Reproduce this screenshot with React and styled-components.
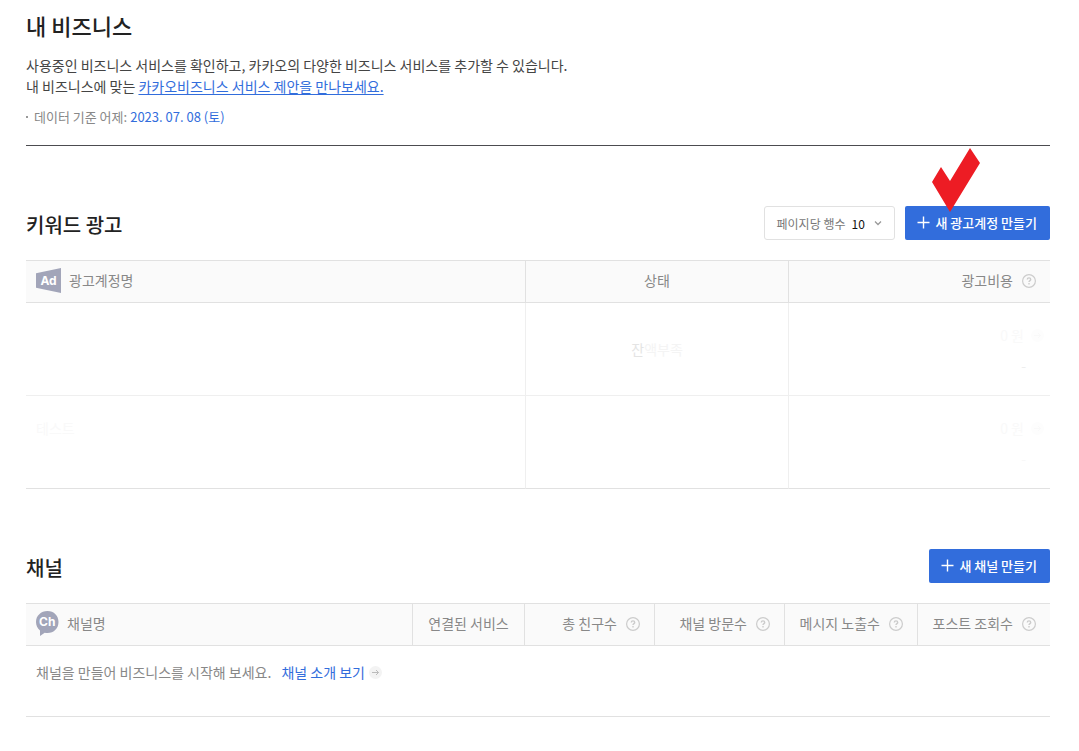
import styled, { createGlobalStyle } from "styled-components";

const GlobalStyle = createGlobalStyle`
  * {
    box-sizing: border-box;
  }

  body {
    margin: 0;
    background: #fff;
    color: #222;
    font-family: "Noto Sans CJK KR", "Noto Sans", sans-serif;
    font-size: 14px;
    line-height: 21px;
  }

  button,
  select {
    font-family: inherit;
  }
`;

const Page = styled.main`
  padding: 7px 29px 34px 26px;
`;

const PageHeader = styled.header`
  padding-bottom: 18px;
  border-bottom: 1px solid #4c4c50;
`;

const Title = styled.h1`
  margin: 0 0 12px;
  font-size: 22px;
  font-weight: 500;
  line-height: 36px;
`;

const Intro = styled.p`
  margin: 0 0 9px;
  color: #444;
`;

const IntroLink = styled.a`
  color: #326ddc;
  text-decoration: underline;
  text-underline-offset: 2px;
`;

const Notice = styled.p`
  display: flex;
  align-items: center;
  gap: 3px;
  margin: 0;
  color: #888;
  font-size: 13px;

  &::before {
    content: "";
    width: 2px;
    height: 2px;
    margin-right: 3px;
    background: #999;
  }
`;

const NoticeDate = styled.time`
  color: #326ddc;
`;

const Section = styled.section`
  margin-top: 60px;
`;

const SectionHead = styled.div`
  display: flex;
  align-items: center;
  justify-content: space-between;
  height: 34px;
  margin-bottom: 20px;
`;

const SectionTitle = styled.h2`
  margin: 0;
  padding-top: 4px;
  font-size: 20px;
  font-weight: 500;
  line-height: 30px;
`;

const Actions = styled.div`
  display: flex;
  gap: 10px;
`;

const PageSize = styled.label`
  display: flex;
  align-items: center;
  height: 34px;
  padding: 0 12px;
  border: 1px solid #e1e1e1;
  border-radius: 3px;
  color: #777;
  font-size: 12px;
`;

const PageSizeSelect = styled.select`
  width: 23px;
  margin-left: 6px;
  padding: 0;
  border: 0;
  background: none;
  color: #111;
  font-size: 12px;
  appearance: none;
`;

const CreateButton = styled.button`
  position: relative;
  display: flex;
  align-items: center;
  gap: 5px;
  height: 34px;
  padding: 0 13px 2px 12px;
  border: 0;
  border-radius: 2px;
  background: #326ddc;
  color: #fff;
  font-size: 13px;
  font-weight: 500;
  white-space: nowrap;
`;

const Marker = styled.svg`
  position: absolute;
  top: -58px;
  left: 27px;
  pointer-events: none;
`;

const Table = styled.table`
  width: 100%;
  table-layout: fixed;
  border-collapse: separate;
  border-spacing: 0;
  border-top: 1px solid #e1e1e1;
`;

const HeadCell = styled.th`
  width: ${({ $width }) => $width || "auto"};
  height: 42px;
  padding: 0 ${({ $align }) => ($align === "right" ? 14 : 10)}px 2px;
  border-bottom: 1px solid #e1e1e1;
  background: #fafafa;
  color: #888;
  font-weight: 400;
  text-align: ${({ $align }) => $align || "left"};
  white-space: nowrap;

  & + & {
    border-left: 1px solid #e1e1e1;
  }
`;

const HeadContent = styled.span`
  display: flex;
  align-items: center;
  justify-content: ${({ $end }) => ($end ? "flex-end" : "flex-start")};
  gap: ${({ $end }) => ($end ? 9 : 8)}px;
`;

const Cell = styled.td`
  height: 93px;
  padding: ${({ $align }) => ($align === "center" ? "0 10px" : "22px 10px 0")};
  border-bottom: 1px solid ${({ $last }) => ($last ? "#e1e1e1" : "#efefef")};
  color: #f9f9f9;
  text-align: ${({ $align }) => $align || "left"};
  vertical-align: ${({ $align }) => ($align === "center" ? "middle" : "top")};

  & + & {
    border-left: 1px solid #efefef;
  }
`;

const CostCell = styled(Cell)`
  padding-right: 6px;
`;

const Cost = styled.div`
  display: flex;
  align-items: center;
  justify-content: flex-end;
  gap: 7px;
`;

const CostNote = styled.div`
  padding: 9px 18px 0 0;
  color: ${({ $color }) => $color};
`;

const Status = styled.span`
  display: inline-block;
  color: #f4f4f4;

  &::first-letter {
    color: #e4e4e4;
  }
`;

const EmptyCell = styled.td`
  height: 71px;
  padding: 16px 10px;
  border-bottom: 1px solid #e1e1e1;
  color: #888;
  vertical-align: top;
`;

const EmptyContent = styled.div`
  display: flex;
  align-items: center;
  gap: 10px;
`;

const MoreLink = styled.a`
  display: flex;
  align-items: center;
  gap: 4px;
  color: #326ddc;
  text-decoration: none;
`;

const PlusIcon = () => (
  <svg width="13" height="13" viewBox="0 0 13 13" aria-hidden="true">
    <path d="M6.5 0.500v12M0.500 6.500h12" stroke="#fff" strokeWidth="1.4" />
  </svg>
);

const ChevronIcon = () => (
  <svg width="8" height="6" viewBox="0 0 8 6" aria-hidden="true">
    <path d="M1 1.5l3 3 3-3" fill="none" stroke="#999" strokeWidth="1.3" />
  </svg>
);

const HelpIcon = () => (
  <svg width="14" height="14" viewBox="0 0 14 14" role="img" aria-label="도움말">
    <circle cx="7" cy="7" r="6.4" fill="none" stroke="#ccc" strokeWidth="1.2" />
    <path
      d="M5.3 5.4C5.3 3.4 8.7 3.4 8.7 5.4C8.7 6.6 7 6.6 7 8.1M7 9.1v1.4"
      fill="none"
      stroke="#ccc"
      strokeWidth="1.4"
    />
  </svg>
);

const ArrowIcon = ({ background = "#f3f3f3", stroke = "#bbb" }) => (
  <svg width="13" height="13" viewBox="0 0 13 13" aria-hidden="true">
    <circle cx="6.5" cy="6.5" r="6.5" fill={background} />
    <path d="M3 6.5h6.5M7 4l2.5 2.5L7 9" fill="none" stroke={stroke} />
  </svg>
);

const AdIcon = () => (
  <svg width="25" height="25" viewBox="0 0 25 25" aria-hidden="true">
    <path d="M0 5.2L25 0v25L0 19.8z" fill="#a2a5b9" />
    <text
      x="12.5"
      y="17"
      fill="#fff"
      fontFamily="Inter, sans-serif"
      fontSize="12"
      fontWeight="700"
      textAnchor="middle"
    >
      Ad
    </text>
  </svg>
);

const ChannelIcon = () => (
  <svg width="23" height="25" viewBox="0 0 23 25" aria-hidden="true">
    <path
      d="M11.5 0C18 0 22.5 4.7 22.5 11s-4.500 11-11 11c-1 0-2-.1-2.8-.3L4 25V19.5C1.500 17.500 0 14.500 0 11 0 4.700 5 0 11.500 0z"
      fill="#a2a5b9"
    />
    <text
      x="11.3"
      y="15"
      fill="#fff"
      fontFamily="Inter, sans-serif"
      fontSize="12"
      fontWeight="700"
      textAnchor="middle"
    >
      Ch
    </text>
  </svg>
);

const accounts = [
  { name: "", status: "잔액부족", cost: "0 원", noteColor: "#eee" },
  { name: "테스트", status: "", cost: "0 원", noteColor: "#f8f8f8" },
];

const channelColumns = [
  { label: "총 친구수", width: "130px" },
  { label: "채널 방문수", width: "130px" },
  { label: "메시지 노출수", width: "133px" },
  { label: "포스트 조회수", width: "133px" },
];

const KeywordAds = () => (
  <Section>
    <SectionHead>
      <SectionTitle>키워드 광고</SectionTitle>
      <Actions>
        <PageSize>
          페이지당 행수
          <PageSizeSelect defaultValue="10">
            <option>10</option>
            <option>20</option>
            <option>50</option>
          </PageSizeSelect>
          <ChevronIcon />
        </PageSize>
        <CreateButton type="button">
          <PlusIcon />
          새 광고계정 만들기
          <Marker width="48" height="64" viewBox="0 0 48 64" aria-hidden="true">
            <path d="M38 0l10 15-30 49L0 34l9-15 9 14z" fill="#ed1c24" />
          </Marker>
        </CreateButton>
      </Actions>
    </SectionHead>
    <Table>
      <thead>
        <tr>
          <HeadCell>
            <HeadContent>
              <AdIcon />
              광고계정명
            </HeadContent>
          </HeadCell>
          <HeadCell $width="263px" $align="center">
            상태
          </HeadCell>
          <HeadCell $width="262px" $align="right">
            <HeadContent $end>
              광고비용
              <HelpIcon />
            </HeadContent>
          </HeadCell>
        </tr>
      </thead>
      <tbody>
        {accounts.map((account, index) => {
          const last = index === accounts.length - 1;
          return (
            <tr key={index}>
              <Cell $last={last}>{account.name}</Cell>
              <Cell $last={last} $align="center">
                <Status>{account.status}</Status>
              </Cell>
              <CostCell $last={last} $align="right">
                <Cost>
                  {account.cost}
                  <ArrowIcon background="#fdfdfd" stroke="#f9f9f9" />
                </Cost>
                <CostNote $color={account.noteColor}>-</CostNote>
              </CostCell>
            </tr>
          );
        })}
      </tbody>
    </Table>
  </Section>
);

const Channels = () => (
  <Section>
    <SectionHead>
      <SectionTitle>채널</SectionTitle>
      <CreateButton type="button">
        <PlusIcon />
        새 채널 만들기
      </CreateButton>
    </SectionHead>
    <Table>
      <thead>
        <tr>
          <HeadCell>
            <HeadContent>
              <ChannelIcon />
              채널명
            </HeadContent>
          </HeadCell>
          <HeadCell $width="112px" $align="center">
            연결된 서비스
          </HeadCell>
          {channelColumns.map(({ label, width }) => (
            <HeadCell key={label} $width={width} $align="right">
              <HeadContent $end>
                {label}
                <HelpIcon />
              </HeadContent>
            </HeadCell>
          ))}
        </tr>
      </thead>
      <tbody>
        <tr>
          <EmptyCell colSpan={6}>
            <EmptyContent>
              채널을 만들어 비즈니스를 시작해 보세요.
              <MoreLink href="#channel">
                채널 소개 보기
                <ArrowIcon />
              </MoreLink>
            </EmptyContent>
          </EmptyCell>
        </tr>
      </tbody>
    </Table>
  </Section>
);

const App = () => {
  return (
    <>
      <GlobalStyle />
      <Page>
        <PageHeader>
          <Title>내 비즈니스</Title>
          <Intro>
            사용중인 비즈니스 서비스를 확인하고, 카카오의 다양한 비즈니스
            서비스를 추가할 수 있습니다.
            <br />내 비즈니스에 맞는{" "}
            <IntroLink href="#proposal">
              카카오비즈니스 서비스 제안을 만나보세요.
            </IntroLink>
          </Intro>
          <Notice>
            데이터 기준 어제:
            <NoticeDate dateTime="2023-07-08">2023. 07. 08 (토)</NoticeDate>
          </Notice>
        </PageHeader>
        <KeywordAds />
        <Channels />
      </Page>
    </>
  );
};

export default App;
